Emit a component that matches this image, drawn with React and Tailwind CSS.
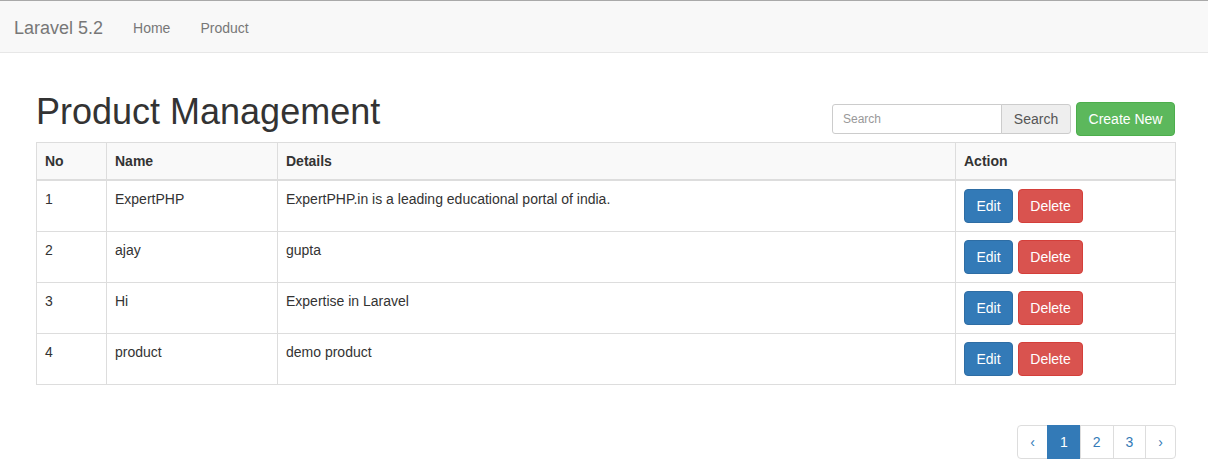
import React from "react";

const products = [
  { id: 1, name: "ExpertPHP", details: "ExpertPHP.in is a leading educational portal of india." },
  { id: 2, name: "ajay", details: "gupta" },
  { id: 3, name: "Hi", details: "Expertise in Laravel" },
  { id: 4, name: "product", details: "demo product" },
];

export default function App() {
  return (
    <div className="min-h-[472px] bg-white text-[14px] leading-[20px] text-[#333]" style={{ fontFamily: '"Liberation Sans", Arial, sans-serif' }}>
      <div className="h-px bg-[#a9a9a9]" />
      <nav className="flex h-[52px] items-center border-b border-[#e7e7e7] bg-[#f8f8f8] pt-[3px]">
        <a className="pl-[14px] pr-[15px] text-[18px] leading-[20px] text-[#777]">Laravel 5.2</a>
        <a className="px-[15px] text-[#777]">Home</a>
        <a className="px-[15px] text-[#777]">Product</a>
      </nav>

      <div className="pl-[36px] pr-[33px] pt-[19px]">
        <div className="flex items-start justify-between">
          <h2 className="mt-[20px] mb-[10px] text-[36px] font-normal leading-[39.6px] text-[#333]">Product Management</h2>
          <div className="mt-[30px] flex items-center">
            <div className="flex h-[30px]">
              <input
                placeholder="Search"
                className="h-[30px] w-[170px] rounded-l-[3px] border border-[#ccc] px-[10px] text-[12px] text-[#555] placeholder:text-[#999] outline-none"
              />
              <span className="-ml-px flex h-[30px] w-[70px] items-center justify-center rounded-r-[3px] border border-[#ccc] bg-[#eee] text-[14px] text-[#555]">
                Search
              </span>
            </div>
            <button className="ml-[5px] h-[34px] w-[99px] rounded-[4px] border border-[#4cae4c] bg-[#5cb85c] text-[14px] text-white">
              Create New
            </button>
          </div>
        </div>

        <table className="w-[1139px] table-fixed border-collapse border border-[#ddd]">
          <colgroup>
            <col className="w-[70px]" />
            <col className="w-[171px]" />
            <col className="w-[678px]" />
            <col className="w-[220px]" />
          </colgroup>
          <thead>
            <tr className="bg-[#f9f9f9]">
              <th className="border border-b-2 border-[#ddd] p-[8px] text-left font-bold">No</th>
              <th className="border border-b-2 border-[#ddd] p-[8px] text-left font-bold">Name</th>
              <th className="border border-b-2 border-[#ddd] p-[8px] text-left font-bold">Details</th>
              <th className="border border-b-2 border-[#ddd] p-[8px] text-left font-bold">Action</th>
            </tr>
          </thead>
          <tbody>
            {products.map(p => (
              <tr key={p.id}>
                <td className="border border-[#ddd] p-[8px] align-top">{p.id}</td>
                <td className="border border-[#ddd] p-[8px] align-top">{p.name}</td>
                <td className="border border-[#ddd] p-[8px] align-top">{p.details}</td>
                <td className="border border-[#ddd] p-[8px] align-top">
                  <div className="flex gap-[5px]">
                    <button className="h-[34px] w-[49px] rounded-[4px] border border-[#2e6da4] bg-[#337ab7] text-white">Edit</button>
                    <button className="h-[34px] w-[65px] rounded-[4px] border border-[#d43f3a] bg-[#d9534f] text-white">Delete</button>
                  </div>
                </td>
              </tr>
            ))}
          </tbody>
        </table>

        <div className="mt-[40px] -mr-px flex justify-end">
          <ul className="flex">
            <li className="rounded-l-[4px] border border-[#ddd] px-[12px] py-[6px] text-[#337ab7]">‹</li>
            <li className="-ml-px border border-[#337ab7] bg-[#337ab7] px-[12px] py-[6px] text-white">1</li>
            <li className="-ml-px border border-[#ddd] px-[12px] py-[6px] text-[#337ab7]">2</li>
            <li className="-ml-px border border-[#ddd] px-[12px] py-[6px] text-[#337ab7]">3</li>
            <li className="-ml-px rounded-r-[4px] border border-[#ddd] px-[12px] py-[6px] text-[#337ab7]">›</li>
          </ul>
        </div>
      </div>
    </div>
  );
}
